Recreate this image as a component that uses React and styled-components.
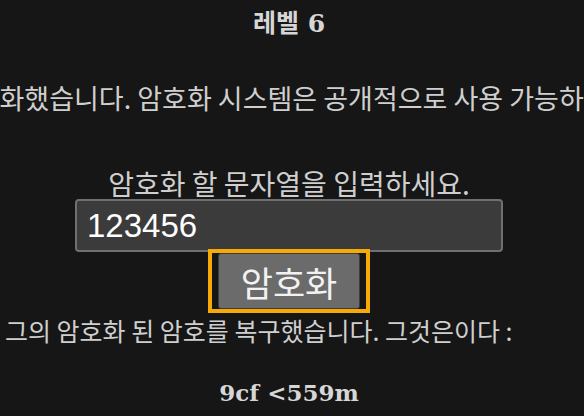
import React, { useState } from "react";
import styled, { createGlobalStyle } from "styled-components";

const GlobalStyle = createGlobalStyle`
  html, body {
    margin: 0;
    padding: 0;
    background-color: #161616;
  }
  body {
    font-family: "Noto Sans CJK KR", "Noto Sans", sans-serif;
    color: #cfcfcf;
    overflow: hidden;
  }
`;

const Page = styled.div`
  width: 584px;
  height: 416px;
  display: flex;
  flex-direction: column;
  align-items: center;
  overflow: hidden;
  padding-right: 6px;
  box-sizing: border-box;
`;

const Title = styled.h2`
  margin: 10px 0 0;
  font-family: "DejaVu Serif", "Noto Sans CJK KR", serif;
  font-size: 25px;
  line-height: 28px;
  font-weight: bold;
  color: #d6d6d6;
`;

const Line = styled.p`
  margin: ${(p) => p.$top}px 0 0;
  font-size: ${(p) => p.$size || 27}px;
  line-height: 28px;
  white-space: nowrap;
  color: #cfcfcf;
  align-self: ${(p) => (p.$left ? "flex-start" : "center")};
  margin-left: ${(p) => (p.$left ? "5px" : "0")};
`;

const Form = styled.form`
  display: flex;
  flex-direction: column;
  align-items: center;
`;

const TextInput = styled.input`
  margin-top: 2px;
  width: 428px;
  height: 53px;
  box-sizing: border-box;
  background-color: #3b3b3b;
  border: 2px solid #6f6f6f;
  border-radius: 4px;
  padding: 0 10px;
  font-family: "Liberation Sans", Arial, sans-serif;
  font-size: 33px;
  color: #ffffff;
  outline: none;
`;

const FocusRing = styled.div`
  margin-top: -3px;
  border: 4px solid #f7aa06;
  padding: 0 6px;
  display: flex;
`;

const SubmitButton = styled.button`
  width: 142px;
  height: 56px;
  background-color: #6b6b6b;
  border: 1px solid #3c3c3c;
  border-radius: 3px;
  font-family: "Noto Sans CJK KR", sans-serif;
  font-size: 35px;
  color: #f2f2f2;
  cursor: pointer;
  padding: 0;
`;

const Password = styled.div`
  margin-top: 35px;
  font-family: "DejaVu Serif", serif;
  font-weight: bold;
  font-size: 23px;
  line-height: 28px;
  color: #d6d6d6;
`;

export default function App() {
  const [value, setValue] = useState("123456");

  return (
    <>
      <GlobalStyle />
      <Page>
        <Title>레벨 6</Title>
        <Line $top={46}>
          네트워크 보안 샘은 자신의 암호를 암호화했습니다. 암호화 시스템은 공개적으로 사용 가능하며 이 양식으로 액세스 할 수 있습니다 :
        </Line>
        <Form onSubmit={(e) => e.preventDefault()}>
          <Line $top={57} $size={28}>암호화 할 문자열을 입력하세요.</Line>
          <TextInput value={value} onChange={(e) => setValue(e.target.value)} />
          <FocusRing>
            <SubmitButton type="submit">암호화</SubmitButton>
          </FocusRing>
        </Form>
        <Line $top={3} $size={25} $left>
          그의 암호화 된 암호를 복구했습니다. 그것은이다 :
        </Line>
        <Password>9cf &lt;559m</Password>
      </Page>
    </>
  );
}
